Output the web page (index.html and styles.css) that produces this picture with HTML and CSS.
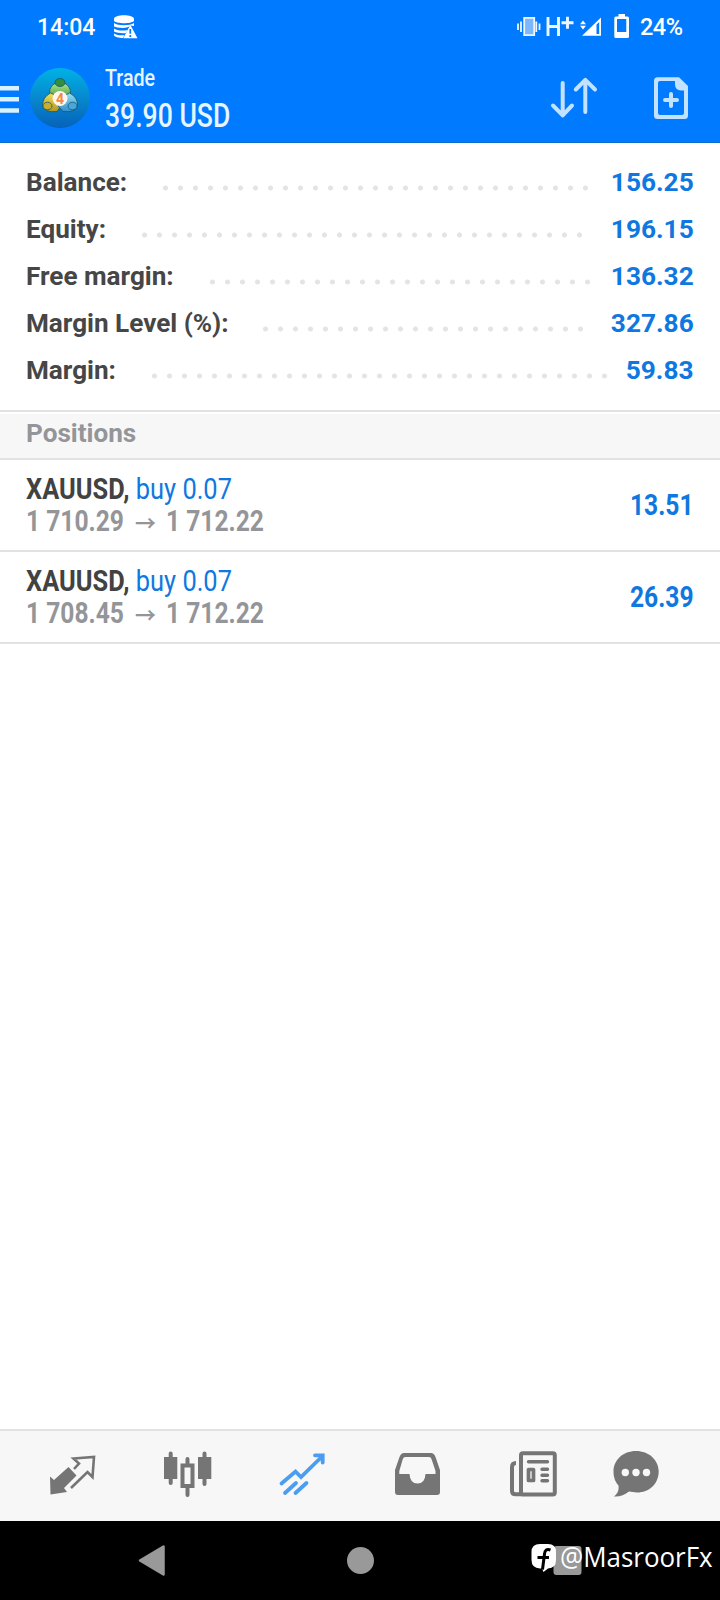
FILE: index.html
```html
<!DOCTYPE html>
<html lang="en">
<head>
<meta charset="utf-8">
<title>Trade</title>
<link rel="stylesheet" href="styles.css">
</head>
<body>
<header class="header">
  <div class="status">
    <div class="status-left">
      <span class="clock">14:04</span>
      <svg width="24" height="24" viewBox="0 0 24 24"><path d="M0 4C0-1 20-1 20 4V6C17 9 3 9 0 6ZM0 8C4 11 16 11 20 8V11L17 10.500C14 14 3 13 0 11.500ZM0 13.500C4 16 10 16 13.500 15L12 18C8 18.500 3 18 0 16.500ZM0 18.500C3 20.500 8 20.500 10.500 20L9 23C5 23 0 22 0 20Z" fill="#fff"/><path d="M16.300 9.800L23.500 23.300H9.300Z" fill="#fff"/><path d="M16.300 14V18.700M16.300 20V22" stroke="#007aff" stroke-width="1.700"/></svg>
    </div>
    <div class="status-right">
      <svg width="168" height="26" viewBox="514 12 168 26" class="signals">
        <g fill="none" stroke="#eef6ff" stroke-width="1.800"><path d="M518 23.500V30M521 21.500V32M536.300 21.500V32M539.500 23.500V30"/><path d="M524.200 17.800H534.200V35.200H524.200Z" fill="#7db8ff"/></g>
        <g fill="none" stroke="#eef6ff" stroke-width="2.900"><path d="M548 17V36M558.500 17V36M548 26.500H558.500M561.500 22.800H573.500M567.500 16.800V28.800"/></g>
        <path d="M580 24.300L583 20.500L586 24.300ZM580 25.800L583 29.500L586 25.800Z" fill="#fff"/>
        <path d="M582 35.800L601 17.500V35.800Z" fill="#fff"/><path d="M596.500 24.500L599.200 22V34H596.500Z" fill="#007aff"/>
        <path d="M618.500 14H625V16.500H627.500Q629 16.500 629 18V36.500Q629 38 627.500 38H615.800Q614.300 38 614.300 36.500V18Q614.300 16.500 615.800 16.500H618.500ZM617 19V32H626.300V19Z" fill="#fff" fill-rule="evenodd"/>
        <text x="640" y="35" textLength="43" class="battery">24%</text>
      </svg>
    </div>
  </div>
  <div class="toolbar">
    <svg width="19" height="60" viewBox="0 68 19 60"><path d="M0 88.300H19M0 99.300H19M0 110.500H19" stroke="#d9f0ff" stroke-width="4.600"/></svg>
    <svg class="logo" width="60" height="60" viewBox="0 0 60 60">
      <defs>
        <linearGradient id="sky" x2="0" y2="1"><stop stop-color="#00b2e5"/><stop offset=".5" stop-color="#0788cf"/><stop offset="1" stop-color="#0662ba"/></linearGradient>
        <linearGradient id="green" x2="0" y2="1"><stop stop-color="#b5e68a"/><stop offset="1" stop-color="#328f3b"/></linearGradient>
        <linearGradient id="gold" x2="0" y2="1"><stop stop-color="#f0df59"/><stop offset="1" stop-color="#b39520"/></linearGradient>
        <linearGradient id="azure" x2="0" y2="1"><stop stop-color="#94def8"/><stop offset="1" stop-color="#328fcb"/></linearGradient>
      </defs>
      <circle cx="30" cy="30" r="30" fill="url(#sky)"/>
      <g stroke-width=".8" stroke="#15566b">
        <path d="M19.500 27Q18.500 15 30 14.500Q41.500 15 40.500 27L37 33H23Z" fill="url(#green)"/>
        <ellipse cx="30" cy="14.500" rx="5" ry="4" fill="#338f3c"/>
        <path d="M20.500 25Q12.500 29 12.500 38Q15 45 27 43.500L31 38L25 27Z" fill="url(#gold)"/>
        <ellipse cx="17.500" cy="38" rx="4.500" ry="3.800" fill="#c8ad31"/>
        <path d="M39.500 25Q48 29 47.500 38Q45 45 33 43.500L28 38L36 27Z" fill="url(#azure)"/>
        <ellipse cx="42.500" cy="38" rx="4.500" ry="3.800" fill="#4aa6da"/>
      </g>
      <circle cx="30" cy="30.500" r="7.500" fill="#fff7ee"/>
      <text x="30" y="35.500" text-anchor="middle" class="logo-digit">4</text>
    </svg>
    <div class="titles">
      <div class="title">Trade</div>
      <div class="amount">39.90 USD</div>
    </div>
    <div class="actions">
      <svg width="48" height="44" viewBox="550 76 48 44"><path d="M562.700 83V115.500M553 105.500L562.700 115.300L572 105.500M585.300 112V80M575.800 89.500L585.300 79.800L595 89.500" fill="none" stroke="#c2e2ff" stroke-width="4" stroke-linecap="round" stroke-linejoin="round"/></svg>
      <svg width="36" height="44" viewBox="653 76 36 44"><path d="M657.500 77.300H679L688 86V115.500Q688 119 684.500 119H657.500Q654 119 654 115.500V80.800Q654 77.300 657.500 77.300ZM660 81Q658 81 658 83V113Q658 115 660 115H682Q684 115 684 113V90.500H681Q675 90 675 84V81Z" fill="#c2e2ff" fill-rule="evenodd"/><path d="M671 94V106M665 100H677" stroke="#c2e2ff" stroke-width="4" stroke-linecap="round"/></svg>
    </div>
  </div>
</header>
<main class="content">
  <section class="summary">
    <div class="row balance"><span class="label">Balance:</span><i class="leader"></i><b class="value">156.25</b></div>
    <div class="row equity"><span class="label">Equity:</span><i class="leader"></i><b class="value">196.15</b></div>
    <div class="row free"><span class="label">Free margin:</span><i class="leader"></i><b class="value">136.32</b></div>
    <div class="row level"><span class="label">Margin Level (%):</span><i class="leader"></i><b class="value">327.86</b></div>
    <div class="row margin"><span class="label">Margin:</span><i class="leader"></i><b class="value">59.83</b></div>
  </section>
  <h2 class="section-title"><span class="label">Positions</span></h2>
  <article class="position">
    <div>
      <div class="deal">XAUUSD, <span class="side">buy 0.07</span></div>
      <div class="prices"><span class="price">1 710.29</span><span class="arrow">→</span><span class="price">1 712.22</span></div>
    </div>
    <span class="profit">13.51</span>
  </article>
  <article class="position">
    <div>
      <div class="deal">XAUUSD, <span class="side">buy 0.07</span></div>
      <div class="prices"><span class="price">1 708.45</span><span class="arrow">→</span><span class="price">1 712.22</span></div>
    </div>
    <span class="profit">26.39</span>
  </article>
</main>
<nav class="tabs">
  <svg width="48" height="50" viewBox="48 1450 48 50"><path d="M50 1476.500L54 1480L68.500 1467L76.500 1475.500L64 1488L67 1492L50.500 1494.500Z" fill="#757575"/><path d="M74 1469L79 1463.500L73.500 1458.500L94 1457L92.500 1477L87.500 1472L71 1488" fill="none" stroke="#757575" stroke-width="2.600"/></svg>
  <svg width="50" height="50" viewBox="163 1450 50 50"><g stroke="#757575" stroke-width="4" stroke-linecap="round"><path d="M170.700 1453.500V1483M204.500 1453.500V1484M187.500 1459V1464M187.500 1488V1495"/><path d="M182.500 1465.500H192.500V1486H182.500Z" fill="none"/></g><path d="M164 1457H177.300V1479H164ZM198 1457H211.300V1479H198Z" fill="#757575"/></svg>
  <svg width="48" height="50" viewBox="278 1450 48 50"><path d="M281.500 1483.500L295.500 1471.500L301 1477L321 1457.500M285 1493L296 1483M295.500 1493L306.500 1483M315 1455.300H322.700V1462.500" fill="none" stroke="#4c9df0" stroke-width="3.800" stroke-linecap="round" stroke-linejoin="miter"/></svg>
  <svg width="48" height="50" viewBox="394 1450 48 50"><path d="M404 1453H431Q434 1453 435.500 1457L440 1470V1492Q440 1495 437 1495H398Q395 1495 395 1492V1470L399.500 1457Q401 1453 404 1453ZM405.500 1457Q403.500 1457 402.800 1459L399.300 1471V1474H409.500Q410 1483.500 417.500 1483.500Q425 1483.500 425.500 1474H435.500V1471L431.500 1459Q431 1457 429 1457Z" fill="#757575" fill-rule="evenodd"/></svg>
  <svg width="50" height="50" viewBox="508 1450 50 50"><g fill="none" stroke="#757575" stroke-width="4"><rect x="521" y="1453.200" width="33.800" height="41.200" rx="2"/><path d="M516 1463Q512 1463 512 1467V1491Q512 1494.300 515.500 1494.300H522"/><path d="M528.500 1461.800H547.500M542 1469.200H547.500M542 1475.200H547.500M542 1480.800H547.500" stroke-width="3.400" stroke-linecap="round"/><rect x="528.500" y="1469.500" width="5" height="11" stroke-width="3.700" stroke-linejoin="round"/></g></svg>
  <svg width="48" height="50" viewBox="612 1450 48 50"><path d="M636 1451C649 1451 658.700 1460 658.700 1471.500C658.700 1484 649 1492.500 637 1492.500L629 1491.500C625 1495 619 1497 614 1496.500C618 1493 619 1490 618.500 1485.500C615.500 1482 613.500 1478 613.500 1471.500C613.500 1460 623 1451 636 1451Z" fill="#757575"/><g fill="#f7f7f7"><circle cx="625.300" cy="1472.500" r="3.700"/><circle cx="636" cy="1472.500" r="3.700"/><circle cx="646.500" cy="1472.500" r="3.700"/></g></svg>
</nav>
<footer class="sysnav">
  <svg width="28" height="32" viewBox="138 1545 28 32"><path d="M140 1560.500L163.500 1546.500V1574.500Z" fill="#999" stroke="#999" stroke-width="2.500" stroke-linejoin="round"/></svg>
  <svg width="28" height="32" viewBox="346 1545 28 32"><circle cx="360.500" cy="1560.500" r="13.500" fill="#999"/></svg>
  <svg width="28" height="32" viewBox="553 1545 28 32"><rect x="553.500" y="1546" width="28" height="29" rx="3" fill="#999"/></svg>
  <div class="credit">
    <svg width="26" height="30" viewBox="0 0 26 30"><path d="M9 1H17Q25 1 25 9V17Q25 25 17 25.500L12.500 29L11 25.500H9Q.500 25 .500 17V9Q.500 1 9 1Z" fill="#fff"/><path d="M19.500 7Q14 5 13.500 11L11.500 26.500M6.500 14.500H18" fill="none" stroke="#000" stroke-width="3"/></svg>
    <span class="handle">@MasroorFx</span>
  </div>
</footer>
</body>
</html>
```
FILE: styles.css
```css
* { box-sizing: border-box; }
body {
  margin: 0;
  width: 720px;
  height: 1600px;
  display: flex;
  flex-direction: column;
  background: #fff;
  font-family: Roboto, "Liberation Sans", sans-serif;
  white-space: nowrap;
  overflow: hidden;
}
svg { display: block; flex: none; overflow: visible; }

.header {
  height: 143px;
  background: #007aff;
  border-bottom: 1px solid #0b6bd0;
  color: #e6f5ff;
}
.status {
  height: 54px;
  padding: 0 38px 0 37px;
  display: flex;
  justify-content: space-between;
  align-items: center;
}
.status-left { display: flex; gap: 20px; align-items: center; color: #fff; }
.clock { font-size: 23.5px; font-weight: 500; width: 57px; line-height: 54px; transform: scaleX(.98); transform-origin: 0 0; }
.signals { margin-top: -4px; }
.battery { font-size: 23.5px; font-weight: 500; fill: #fff; }
.toolbar { height: 89px; display: flex; padding-top: 14px; }
.logo { margin-left: 11px; }
.logo-digit { font-size: 14px; font-weight: 700; fill: #ed8a45; }
.titles { margin-left: 15px; flex: 1; }
.title { font-size: 24px; font-weight: 500; line-height: 20px; transform: scaleX(.82); transform-origin: 0 0; }
.amount { font-size: 32.5px; font-weight: 500; line-height: 38px; margin-top: 9px; transform: scaleX(.818); transform-origin: 0 0; }
.actions { display: flex; gap: 55px; padding: 8px 31px 0 0; }

.content { flex: 1; }
.summary { height: 267px; padding: 16px 26px 0; }
.row {
  height: 47px;
  display: flex;
  font-size: 26.5px;
  line-height: 46px;
}
.label {
  flex: none;
  display: block;
  color: #464646;
  font-weight: 700;
  transform: scaleX(.985);
  transform-origin: 0 0;
}
.leader {
  height: 6px;
  margin-top: 26px;
  background: radial-gradient(circle at 7.5px 3px, #e4e4e4 2.1px, transparent 2.9px) 0 0 / 15px 6px repeat-x;
}
.value { margin-left: auto; color: #0f78e0; font-weight: 700; transform: scaleX(.99); transform-origin: 100% 0; }
.balance .label { width: 132px; }
.balance .leader { width: 435px; }
.equity .label { width: 111px; }
.equity .leader { width: 450px; }
.free .label { width: 179px; }
.free .leader { width: 390px; }
.level .label { width: 232px; }
.level .leader { width: 330px; }
.margin .label { width: 121px; }
.margin .leader { width: 465px; }

.section-title {
  margin: 0;
  height: 50px;
  padding: 2px 26px 0;
  border-top: 2px solid #e2e2e2;
  border-bottom: 2px solid #e2e2e2;
  background: linear-gradient(#fff 2px, #f7f7f7 2px);
  font-size: 26.5px;
  line-height: 38px;
}
.section-title .label { color: #949599; }
.position {
  height: 92px;
  padding: 0 26px;
  border-bottom: 2px solid #e2e2e2;
  display: flex;
  justify-content: space-between;
  font-size: 30px;
  font-weight: 700;
}
.deal { color: #424242; line-height: 32px; margin-top: 13px; transform: scaleX(.847); transform-origin: 0 0; }
.side { color: #0f78e0; font-weight: 400; }
.prices { display: flex; line-height: 32px; color: #949599; }
.price { width: 109px; transform: scaleX(.82); transform-origin: 0 0; }
.arrow { width: 31px; font-family: "Noto Sans CJK SC", "DejaVu Sans", sans-serif; font-size: 21px; font-weight: 700; line-height: 34px; }
.profit { color: #0f78e0; line-height: 90px; transform: scaleX(.82); transform-origin: 100% 0; }

.tabs {
  height: 92px;
  padding: 19px 60px 0 48px;
  border-top: 2px solid #e2e2e2;
  background: #f7f7f7;
  display: grid;
  grid-template-columns: 115px 115px 116px 114px 104px 48px;
}
.sysnav {
  position: relative;
  height: 79px;
  padding: 24px 139px 0 138px;
  background: #000;
  display: flex;
  justify-content: space-between;
}
/* account credit laid over the navigation buttons */
.credit { position: absolute; left: 531px; top: 22px; display: flex; gap: 3px; color: #fff; }
.handle { font: 400 27px/28px "Open Sans", sans-serif; transform: scaleX(.96); transform-origin: 0 0; }
```
